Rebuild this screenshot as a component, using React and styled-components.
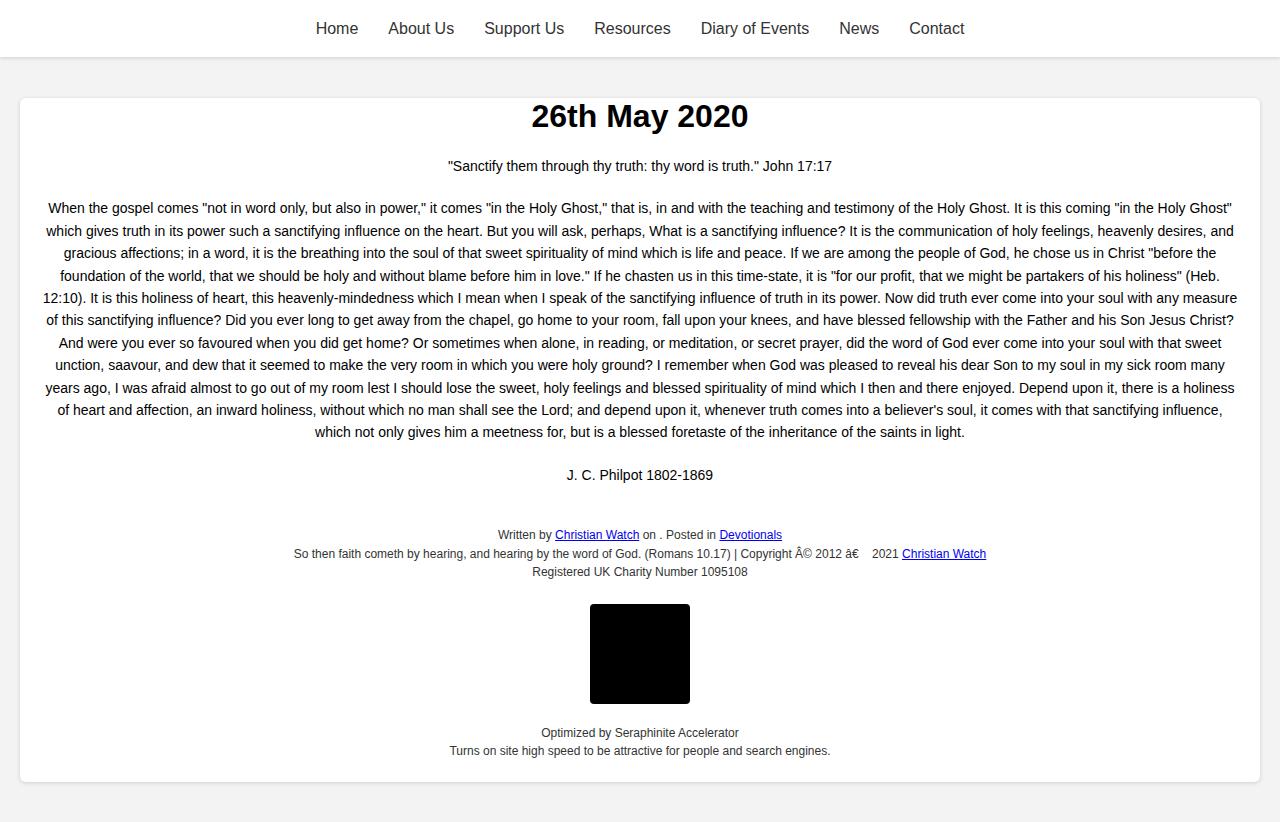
import React from "react";
import styled, { createGlobalStyle } from "styled-components";

const GlobalStyle = createGlobalStyle`
  body {
    margin: 0;
    background: #f3f3f3;
    font-family: "Liberation Sans", Arial, sans-serif;
    color: #000;
  }
`;

const NavBar = styled.nav`
  height: 57px;
  background: #fff;
  box-shadow: 0 1px 4px rgba(0, 0, 0, 0.15);
  display: flex;
  justify-content: center;
  align-items: center;
  gap: 30px;
`;

const NavLink = styled.a`
  font-size: 16px;
  color: #333;
  text-decoration: none;
  cursor: pointer;
`;

const Main = styled.main`
  padding: 41px 20px 40px;
`;

const Card = styled.article`
  background: #fff;
  border-radius: 6px;
  box-shadow: 0 1px 4px rgba(0, 0, 0, 0.15);
  padding: 0 22px 21px;
  text-align: center;
`;

const Title = styled.h1`
  margin: 0 0 21px;
  font-size: 32px;
  line-height: 36px;
  font-weight: bold;
`;

const Para = styled.p`
  margin: 0 0 ${(p) => p.gap || 20}px;
  font-size: 14px;
  line-height: 22.4px;
`;

const Meta = styled.div`
  font-size: 12px;
  line-height: 18.5px;
  color: #333;
  margin-bottom: ${(p) => p.gap || 0}px;
`;

const Link = styled.a`
  color: #00e;
  text-decoration: underline;
`;

const Badge = styled.div`
  width: 100px;
  height: 100px;
  background: #000;
  border-radius: 4px;
  margin: 0 auto 20px;
`;

const links = ["Home", "About Us", "Support Us", "Resources", "Diary of Events", "News", "Contact"];

const body = `When the gospel comes "not in word only, but also in power," it comes "in the Holy Ghost," that is, in and with the teaching and testimony of the Holy Ghost. It is this coming "in the Holy Ghost" which gives truth in its power such a sanctifying influence on the heart. But you will ask, perhaps, What is a sanctifying influence? It is the communication of holy feelings, heavenly desires, and gracious affections; in a word, it is the breathing into the soul of that sweet spirituality of mind which is life and peace. If we are among the people of God, he chose us in Christ "before the foundation of the world, that we should be holy and without blame before him in love." If he chasten us in this time-state, it is "for our profit, that we might be partakers of his holiness" (Heb. 12:10). It is this holiness of heart, this heavenly-mindedness which I mean when I speak of the sanctifying influence of truth in its power. Now did truth ever come into your soul with any measure of this sanctifying influence? Did you ever long to get away from the chapel, go home to your room, fall upon your knees, and have blessed fellowship with the Father and his Son Jesus Christ? And were you ever so favoured when you did get home? Or sometimes when alone, in reading, or meditation, or secret prayer, did the word of God ever come into your soul with that sweet unction, saavour, and dew that it seemed to make the very room in which you were holy ground? I remember when God was pleased to reveal his dear Son to my soul in my sick room many years ago, I was afraid almost to go out of my room lest I should lose the sweet, holy feelings and blessed spirituality of mind which I then and there enjoyed. Depend upon it, there is a holiness of heart and affection, an inward holiness, without which no man shall see the Lord; and depend upon it, whenever truth comes into a believer's soul, it comes with that sanctifying influence, which not only gives him a meetness for, but is a blessed foretaste of the inheritance of the saints in light.`;

export default function App() {
  return (
    <>
      <GlobalStyle />
      <NavBar>
        {links.map((l) => (
          <NavLink key={l}>{l}</NavLink>
        ))}
      </NavBar>
      <Main>
        <Card>
          <Title>26th May 2020</Title>
          <Para>"Sanctify them through thy truth: thy word is truth." John 17:17</Para>
          <Para>{body}</Para>
          <Para gap={40}>J. C. Philpot 1802-1869</Para>
          <Meta>
            Written by <Link>Christian Watch</Link> on . Posted in <Link>Devotionals</Link>
          </Meta>
          <Meta>
            So then faith cometh by hearing, and hearing by the word of God. (Romans 10.17) | Copyright Â© 2012 â€{"\u00a0\u00a0\u00a0\u00a0"}2021 <Link>Christian Watch</Link>
          </Meta>
          <Meta gap={22}>Registered UK Charity Number 1095108</Meta>
          <Badge />
          <Meta>Optimized by Seraphinite Accelerator</Meta>
          <Meta>Turns on site high speed to be attractive for people and search engines.</Meta>
        </Card>
      </Main>
    </>
  );
}
